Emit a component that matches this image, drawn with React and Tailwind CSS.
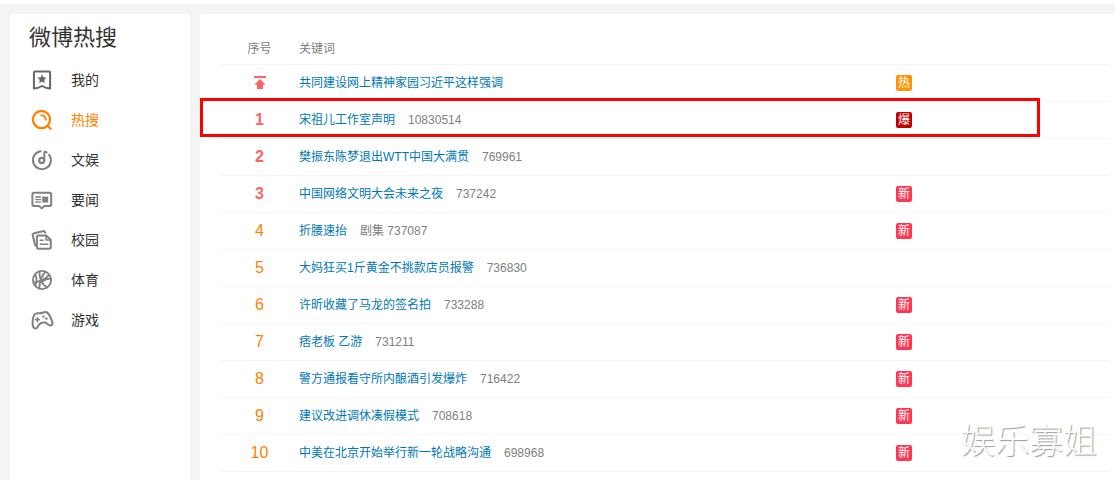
import React from "react";
import clsx from "clsx";

const iconProps = {
  viewBox: "0 0 24 24",
  fill: "none",
  stroke: "currentColor",
  strokeWidth: 2,
  strokeLinecap: "round",
  strokeLinejoin: "round",
  "aria-hidden": true,
  className: "size-6 shrink-0",
};

const MineIcon = () => (
  <svg {...iconProps}>
    <path d="M5.2 3.5h13.6c.8 0 1.3.5 1.3 1.300v15.700c-2.900-.1-5.500-1-8.100-2.500-2.600 1.500-5.200 2.400-8.100 2.500V4.800c0-.8.5-1.300 1.300-1.300z" />
    <path
      d="M12 6.700l1.300 2.700 2.900.4-2.100 2.100.5 2.900-2.600-1.400-2.600 1.400.5-2.900-2.100-2.100 2.900-.4z"
      fill="currentColor"
      strokeWidth="0.3"
    />
  </svg>
);

const HotIcon = () => (
  <svg {...iconProps} strokeWidth="2.3">
    <circle cx="11.500" cy="11.600" r="8.600" />
    <path d="M17.600 17.800l3 3" strokeWidth="2.300" />
    <path d="M11.300 7.400c2.700 0 4.300 1.600 4.500 4.200" strokeWidth="1.900" />
  </svg>
);

const MusicIcon = () => (
  <svg {...iconProps}>
    <path d="M10.600 3.200A9 9 0 1 0 19.200 6.800" />
    <circle cx="11.700" cy="12.400" r="2.500" strokeWidth="2.200" />
    <path d="M14.300 12.400V4.600c0-1.200 1.300-1 2.400-.2" />
  </svg>
);

const NewsIcon = () => (
  <svg {...iconProps}>
    <path d="M4.200 4.700h15.200c1.100 0 1.800.7 1.800 1.800v9.700c0 1.100-.7 1.800-1.800 1.800h-4.900l-2.800 2.200L8.900 18H4.200c-1.100 0-1.800-.7-1.800-1.800V6.500c0-1.100.7-1.800 1.800-1.800z" />
    <path d="M5.600 9h5M5.600 11.600h5M5.600 14.200h5" strokeWidth="1.300" />
    <path d="M12.200 8.600h6v5.900h-6z" fill="currentColor" stroke="none" />
  </svg>
);

const CampusIcon = () => (
  <svg {...iconProps}>
    <path d="M8.600 7.500h7.600l4.600 4.500v7c0 1-.7 1.700-1.700 1.700H8.600c-1 0-1.700-.7-1.700-1.700V9.200c0-1 .7-1.700 1.700-1.700z" />
    <path d="M16 7.700v4.400h4.700M10.200 12.200h2.800M10.200 16.300h7.600" strokeWidth="1.500" />
    <path d="M5.200 17.600L2.600 6.400l1.600-1.200L14 3l1.300 1.700" />
  </svg>
);

const SportsIcon = () => (
  <svg {...iconProps} strokeWidth="1.800">
    <circle cx="12" cy="12" r="9.100" />
    <path d="M9.600 3.400c-.7 6.600 2 12.400 7.400 16M15.600 3.800c-3 2.600-5.900 8.200-6.300 16.600" />
    <path d="M3.600 14.400c4.600-.4 11-2.200 15.200-7.200M5 6.400c1.800 2.600 2.200 5.800.6 11.200M20.800 10.600c-3.800.2-7 1.400-9.200 3.600" />
  </svg>
);

const GameIcon = () => (
  <svg {...iconProps}>
    <path d="M5.400 5.800c1.200-.9 2.600-.6 3.800-.5 1.700.1 2.700-.2 4.200-.8 1.500-.6 3-.7 4.300.5 1.700 1.700 3.600 5.900 4.600 9 .6 2.200-.2 3.500-1.700 3.600-2.200.1-3.600-2.600-5.600-3-2-.3-4.600.4-5.800 1.800-1.200 1.500-1.500 4-3.600 4-2 0-2.900-1.800-3-4.600-.1-3 .5-6.600 1.400-8.600.3-.6.800-1.100 1.400-1.400z" />
    <path d="M7.400 9.700v3.800M5.500 11.600h3.800" strokeWidth="1.600" />
    <circle cx="13.400" cy="8.600" r="1.200" fill="currentColor" stroke="none" />
    <circle cx="16.400" cy="10.600" r="1.200" fill="currentColor" stroke="none" />
  </svg>
);

const TopIcon = () => (
  <svg viewBox="0 0 12 14" className="mx-auto h-3.5 w-3" fill="#ff6363" role="img" aria-label="置顶">
    <path d="M0 0h12v2H0zM6 3l5.700 5.800H9V13H3V8.800H.3z" />
  </svg>
);

const navItems = [
  { label: "我的", icon: MineIcon, color: "text-[#666666]" },
  { label: "热搜", icon: HotIcon, color: "text-[#ff8200]", active: true },
  { label: "文娱", icon: MusicIcon, color: "text-[#808080]" },
  { label: "要闻", icon: NewsIcon, color: "text-[#808080]" },
  { label: "校园", icon: CampusIcon, color: "text-[#808080]" },
  { label: "体育", icon: SportsIcon, color: "text-[#808080]" },
  { label: "游戏", icon: GameIcon, color: "text-[#808080]" },
];

const topics = [
  { rank: 0, title: "共同建设网上精神家园习近平这样强调", tag: "热" },
  { rank: 1, title: "宋祖儿工作室声明", heat: "10830514", tag: "爆", marked: true },
  { rank: 2, title: "樊振东陈梦退出WTT中国大满贯", heat: "769961" },
  { rank: 3, title: "中国网络文明大会未来之夜", heat: "737242", tag: "新" },
  { rank: 4, title: "折腰速抬", heat: "剧集 737087", tag: "新" },
  { rank: 5, title: "大妈狂买1斤黄金不挑款店员报警", heat: "736830" },
  { rank: 6, title: "许昕收藏了马龙的签名拍", heat: "733288", tag: "新" },
  { rank: 7, title: "痞老板 乙游", heat: "731211", tag: "新" },
  { rank: 8, title: "警方通报看守所内酿酒引发爆炸", heat: "716422", tag: "新" },
  { rank: 9, title: "建议改进调休凑假模式", heat: "708618", tag: "新" },
  { rank: 10, title: "中美在北京开始举行新一轮战略沟通", heat: "698968", tag: "新" },
];

const tagColors = {
  热: "bg-[#ff9406]",
  爆: "bg-[#bd0000]",
  新: "bg-[#ff3852]",
};

const Sidebar = () => (
  <aside className="w-[180px] shrink-0 rounded-t bg-white pt-2">
    <h1 className="pl-[19px] text-[22px] leading-8 text-[#333333]">微博热搜</h1>
    <nav className="mt-1.5">
      {navItems.map(({ label, icon: Icon, color, active }) => (
        <a key={label} href="#" className={clsx("flex h-10 items-center gap-[17px] pl-5", color)}>
          <Icon />
          <span className={clsx("text-sm", active ? "text-[#ff8200]" : "text-[#333333]")}>
            {label}
          </span>
        </a>
      ))}
    </nav>
  </aside>
);

const TopicRow = ({ topic }) => (
  <tr className="relative">
    <td
      className={clsx(
        "h-[37px] border-b border-[#f7f7f7] text-center text-base",
        topic.rank <= 3 ? "font-bold text-[#ff6363]" : "text-[#ff8200]"
      )}
    >
      {topic.rank === 0 ? <TopIcon /> : topic.rank}
    </td>
    <td className="border-b border-[#f7f7f7]">
      <a href="#" className="text-[#0078b6]">
        {topic.title}
      </a>
      {topic.heat && <span className="ml-[13px] text-[#808080]">{topic.heat}</span>}
    </td>
    <td className="border-b border-[#f7f7f7]">
      {topic.tag && (
        <span
          className={clsx(
            "block size-4 rounded-xs text-center leading-[17px] text-white",
            tagColors[topic.tag]
          )}
        >
          {topic.tag}
        </span>
      )}
      {topic.marked && (
        <span className="pointer-events-none absolute -top-1 right-[70px] -left-5 h-[39px] border-3 border-[#ff0000]" />
      )}
    </td>
  </tr>
);

const App = () => {
  return (
    <div className="relative flex min-h-screen flex-col border-t-4 border-white bg-[#f4f4f4] pt-2.5 pl-2.5 font-['Liberation_Sans','Noto_Sans_CJK_SC',sans-serif]">
      <div className="flex flex-1 gap-2.5">
        <Sidebar />
        <main className="min-w-0 flex-1 rounded-tl bg-white pt-[18px] pr-[5px] pl-5">
          <table className="w-full table-fixed border-separate border-spacing-0 text-xs">
            <thead>
              <tr className="text-left text-[#808080]">
                <th className="h-[33px] w-[79px] border-b border-[#f7f7f7] pt-0.5 text-center font-normal">
                  序号
                </th>
                <th className="border-b border-[#f7f7f7] pt-0.5 font-normal">关键词</th>
                <th className="w-[214px] border-b border-[#f7f7f7]" aria-label="标签" />
              </tr>
            </thead>
            <tbody>
              {topics.map((topic) => (
                <TopicRow key={topic.rank} topic={topic} />
              ))}
            </tbody>
          </table>
        </main>
      </div>
      <div className="pointer-events-none absolute right-[18px] bottom-[19px] text-[34px] leading-10 font-light text-white [text-shadow:1px_1px_1px_#999999]">
        娱乐寡姐
      </div>
    </div>
  );
};

export default App;
